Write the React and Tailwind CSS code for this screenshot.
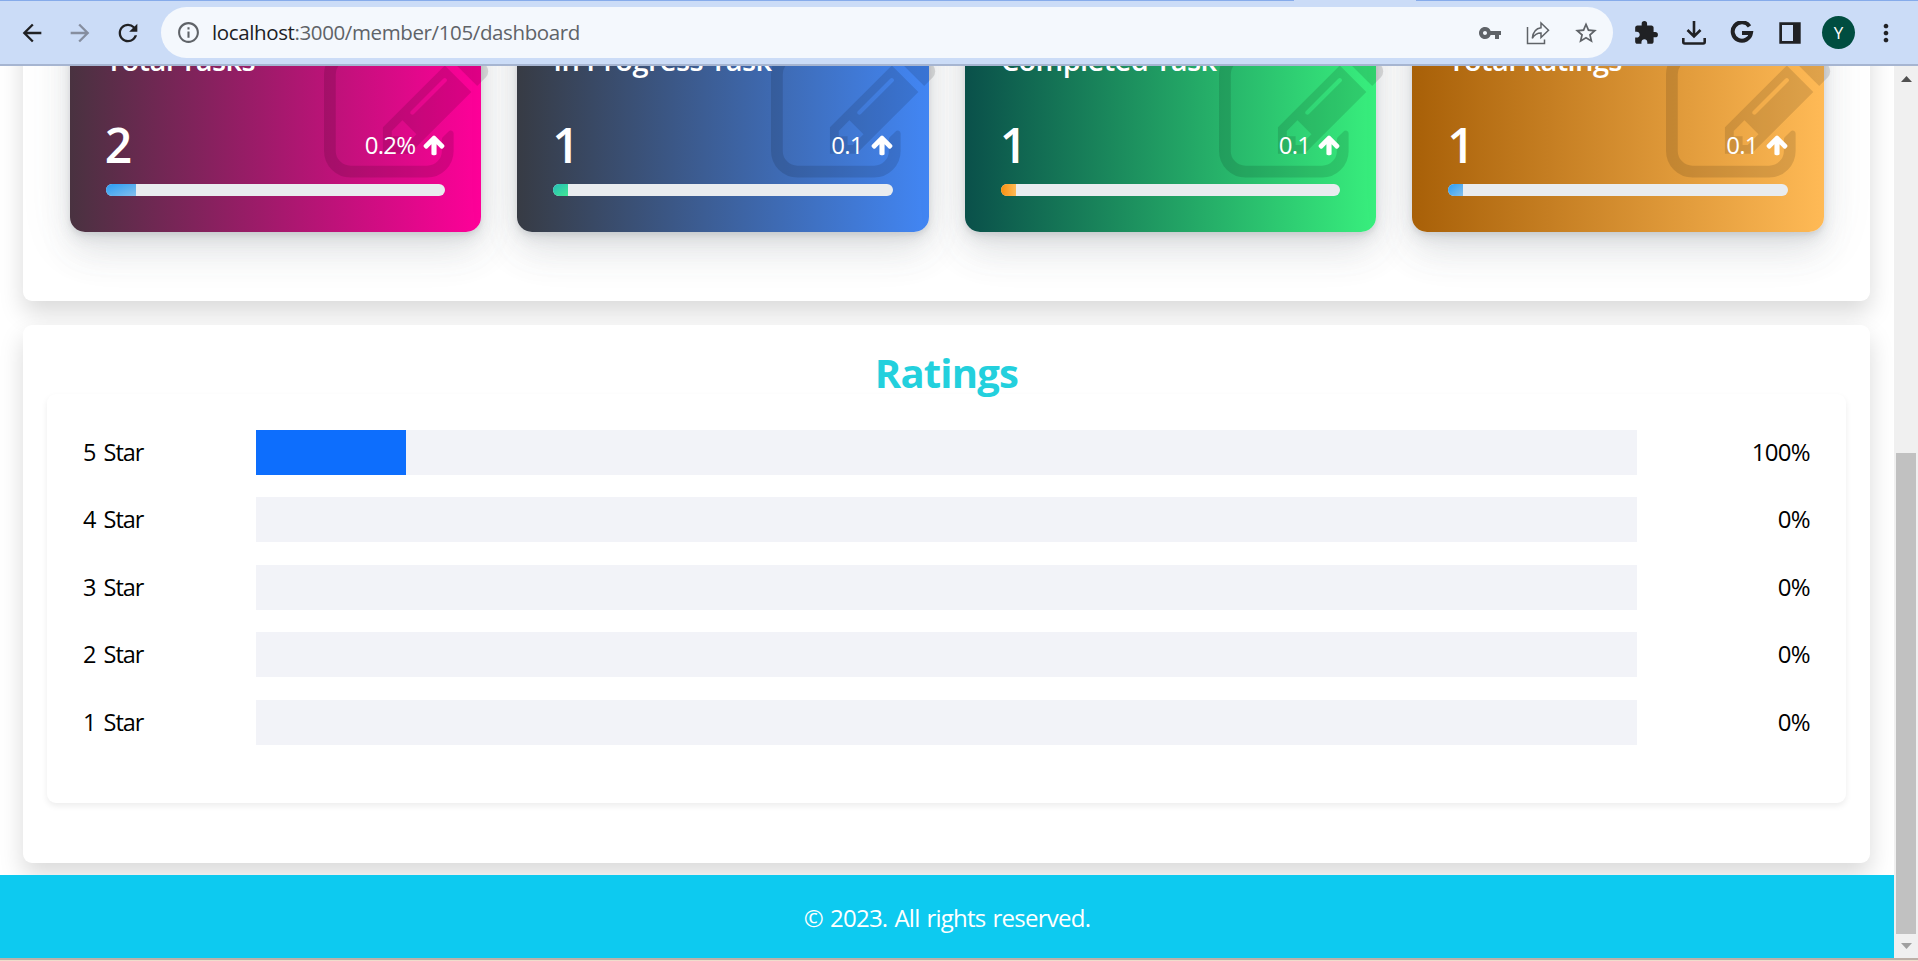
import { MdArrowBack, MdArrowForward, MdRefresh, MdInfoOutline, MdVpnKey, MdStarBorder, MdExtension, MdMoreVert } from "react-icons/md";

const PENCIL =
  "M888 1184l116-116-152-152-116 116v56h96v96h56zm440-720q-16-16-33 1l-350 350q-17 17-1 33t33-1l350-350q17-17 1-33zm80 594v190q0 119-84.5 203.5t-203.5 84.5h-832q-119 0-203.5-84.5t-84.5-203.5v-832q0-119 84.5-203.5t203.5-84.5h832q63 0 117 25 15 7 18 23 3 17-9 29l-49 49q-14 14-32 8-23-6-45-6h-832q-66 0-113 47t-47 113v832q0 66 47 113t113 47h832q66 0 113-47t47-113v-126q0-13 9-22l64-64q15-15 35-7t20 29zm-96-738l288 288-672 672h-288v-288zm444 132l-92 92-288-288 92-92q28-28 68-28t68 28l152 152q28 28 28 68t-28 68z";

const ARROW_UP =
  "M1675 971q0 51-37 90l-75 75q-38 38-91 38-54 0-90-38l-294-293v704q0 52-37.5 84.5t-90.5 32.5h-128q-53 0-90.5-32.5t-37.5-84.5v-704l-294 293q-36 38-90 38t-90-38l-75-75q-38-38-38-90 0-53 38-91l651-651q35-37 90-37 54 0 91 37l651 651q37 39 37 91z";

const cards = [
  { title: "Total Tasks", value: "2", rate: "0.2%", bg: "bg-linear-to-r/srgb from-[#493240] to-[#ff0099]", bar: "w-[30px] bg-linear-to-br/srgb from-[#289cf5] to-[#84c0ec]" },
  { title: "In Progress Task", value: "1", rate: "0.1", bg: "bg-linear-to-r/srgb from-[#373b44] to-[#4286f4]", bar: "w-[15px] bg-linear-to-br/srgb from-[#23bdb8] to-[#43e794]" },
  { title: "Completed Task", value: "1", rate: "0.1", bg: "bg-linear-to-r/srgb from-[#0a504a] to-[#38ef7d]", bar: "w-[15px] bg-linear-to-r/srgb from-[#f9900e] to-[#ffba56]" },
  { title: "Total Ratings", value: "1", rate: "0.1", bg: "bg-linear-to-r/srgb from-[#a86008] to-[#ffba56]", bar: "w-[15px] bg-linear-to-br/srgb from-[#289cf5] to-[#84c0ec]" },
];

const ratings = [
  ["5 Star", "100%"],
  ["4 Star", "0%"],
  ["3 Star", "0%"],
  ["2 Star", "0%"],
  ["1 Star", "0%"],
];

function Toolbar() {
  return (
    <header className="relative z-10 flex h-[66px] shrink-0 items-center border-t border-b-2 border-t-[#86abea] border-b-[#a6b5d1] bg-[#cbdcf7] text-[#202124]">
      <div className="absolute -top-px left-[1294px] h-px w-[122px] bg-[#cbdcf7]" />
      <MdArrowBack className="ml-[18px] size-7" />
      <MdArrowForward className="ml-5 size-7 text-[#868e9f]" />
      <MdRefresh className="ml-5 size-7" />
      <div className="ml-[19px] flex h-[51px] w-[1452px] items-center rounded-full bg-[#f4f8fd] text-[#5f6368]">
        <MdInfoOutline className="ml-[15px] size-[25px]" />
        <p className="ml-[11px] flex-1 text-[20.5px] tracking-[-0.38px]">
          <span className="text-[#202124]">localhost</span>:3000/member/105/dashboard
        </p>
        <MdVpnKey className="size-6" />
        <svg className="ml-6 size-6" viewBox="0 0 24 24" fill="none" stroke="currentColor" strokeWidth="1.5">
          <path d="M1.500 6v16.500h17V18.500M15 2v4.800C9.500 7.500 7 11 6.300 17.300c2.200-4 5-5.300 8.700-5.300v4.500L22.500 9.200z" />
        </svg>
        <MdStarBorder className="mr-[14px] ml-[23px] size-[26px]" />
      </div>
      <MdExtension className="ml-5 size-[26px]" />
      <svg className="ml-[23px] size-6" viewBox="0 0 24 24" fill="none" stroke="currentColor" strokeWidth="2.6">
        <path d="M12 0v15M5.500 9l6.500 6.500L18.500 9M1.300 17v4q0 1.500 1.500 1.500h18.400q1.500 0 1.500-1.500V17" />
      </svg>
      <svg className="ml-6 size-6" viewBox="0 0 24 24" fill="none" stroke="currentColor" strokeWidth="4">
        <path d="M19.500 5.300A9.200 9.200 0 1 0 21 12H12" />
      </svg>
      <svg className="ml-6 size-6" viewBox="0 0 24 24">
        <path fill="currentColor" fillRule="evenodd" d="M1.300 1.300h21.400v21.400H1.300zM4 4v16h11V4z" />
      </svg>
      <span className="ml-5 flex size-[33px] items-center justify-center rounded-full bg-[#004d40] text-[17px] text-white">Y</span>
      <MdMoreVert className="ml-[17px] size-7" />
    </header>
  );
}

function StatCard({ card }) {
  return (
    <article className={`relative flex h-[232px] flex-1 flex-col justify-end rounded-[15px] px-9 pb-9 text-white shadow-[0_11px_52px_rgba(90,97,105,0.1),0_22px_33px_rgba(90,97,105,0.1),0_6px_13px_rgba(90,97,105,0.12),0_3px_4.5px_rgba(90,97,105,0.1)] ${card.bg}`}>
      <svg className="absolute top-[35.500px] right-[-7.800px] size-[165px] fill-black/12" viewBox="0 0 1792 1792">
        <path d={PENCIL} />
      </svg>
      <h5 className="relative text-[29px] leading-9 font-semibold tracking-[-0.6px]">{card.title}</h5>
      <div className="relative mt-[31px] mb-[3px] flex h-[72px] items-center justify-between">
        <h2 className="-ml-px text-[48px] leading-none font-semibold">{card.value}</h2>
        <span className="flex items-center gap-[7px] pb-px text-[24px] tracking-[-0.8px]">
          {card.rate}
          <svg className="-mr-px size-6 fill-white" viewBox="0 0 1792 1792">
            <path d={ARROW_UP} />
          </svg>
        </span>
      </div>
      <div className="relative h-3 overflow-hidden rounded-full bg-[#e9ecef]">
        <div className={`h-full ${card.bar}`} />
      </div>
    </article>
  );
}

export default function App() {
  return (
    <div className="flex h-[961px] w-[1918px] flex-col overflow-hidden bg-white font-['Open_Sans',sans-serif]">
      <Toolbar />
      <div className="flex h-[892px] shrink-0">
        <main className="flex w-[1894px] flex-col justify-end overflow-hidden">
          <section className="mr-6 ml-[23px] flex h-[301px] shrink-0 items-start gap-9 rounded-[9px] bg-white pr-[46.3px] pl-[46.7px] shadow-[0_12px_24px_rgba(0,0,0,0.15)]">
            {cards.map((c) => <StatCard key={c.title} card={c} />)}
          </section>
          <section className="relative mt-6 mr-6 ml-[23px] h-[538px] shrink-0 rounded-[9px] bg-white px-6 pt-6 shadow-[0_12px_24px_rgba(0,0,0,0.15)]">
            <h1 className="h-[45px] text-center text-[40px] leading-[47px] font-bold tracking-[-0.8px] text-[#23d0dd]">Ratings</h1>
            <div className="h-[409px] rounded-[9px] px-9 pt-[35.900px] shadow-[0_3px_6px_rgba(0,0,0,0.075)]">
              {ratings.map(([label, percent], i) => (
                <div key={label} className="mb-[22.5px] flex h-[45px] items-center text-[24px] tracking-[-0.7px] text-black">
                  <span className="w-[10%] text-[23.5px] tracking-[-1px] [word-spacing:3px]">{label}</span>
                  <div className="h-full w-[80%] bg-[#f2f3f8]">
                    {i === 0 && <div className="h-full w-[150px] bg-[#0d6efd]" />}
                  </div>
                  <span className="w-[10%] pb-px text-right">{percent}</span>
                </div>
              ))}
            </div>
          </section>
          <footer className="relative mt-3 flex h-[83px] shrink-0 items-center justify-center bg-[#0dcaf0] pt-0.5 text-[24px] tracking-[-0.75px] text-white [word-spacing:1.5px]">© 2023. All rights reserved.</footer>
        </main>
        <aside className="flex w-6 flex-col items-center bg-[#f0f0f0]">
          <svg className="mt-[10px] h-[6px] w-[11px] shrink-0 fill-[#505050]" viewBox="0 0 11 6"><path d="M0 6L5.500 0L11 6z" /></svg>
          <div className="mt-[371px] h-[481px] w-5 bg-[#c1c1c1]" />
          <svg className="mt-[9px] h-[6px] w-[11px] shrink-0 fill-[#a0a0a0]" viewBox="0 0 11 6"><path d="M0 0H11L5.500 6z" /></svg>
        </aside>
      </div>
      <div className="h-[2px] shrink-0 bg-[#bcb0a8]" />
      <div className="h-px shrink-0 bg-[#efddcc]" />
    </div>
  );
}
